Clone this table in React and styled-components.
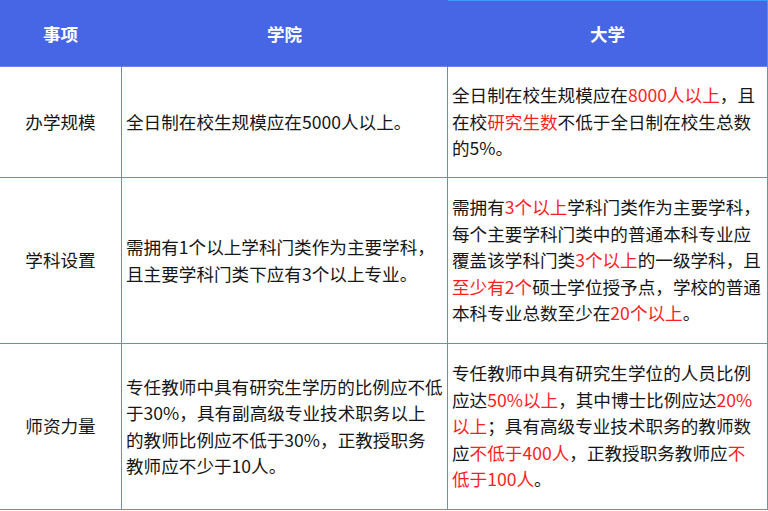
import React from "react"
import styled, { createGlobalStyle } from "styled-components"

const GlobalStyle = createGlobalStyle`
    html, body {
        margin: 0;
        padding: 0;
        background: #ffffff;
    }
    body {
        font-family: "Noto Sans CJK SC", "Noto Sans", sans-serif;
        color: #161616;
    }
`

const rows = [
    {
        item: "办学规模",
        college: [["全日制在校生规模应在5000人以上。"]],
        university: [
            ["全日制在校生规模应在", { red: "8000人以上" }, "，且"],
            ["在校", { red: "研究生数" }, "不低于全日制在校生总数"],
            ["的5%。"],
        ],
    },
    {
        item: "学科设置",
        college: [
            ["需拥有1个以上学科门类作为主要学科，"],
            ["且主要学科门类下应有3个以上专业。"],
        ],
        university: [
            ["需拥有", { red: "3个以上" }, "学科门类作为主要学科，"],
            ["每个主要学科门类中的普通本科专业应"],
            ["覆盖该学科门类", { red: "3个以上" }, "的一级学科，且"],
            [{ red: "至少有2个" }, "硕士学位授予点，学校的普通"],
            ["本科专业总数至少在", { red: "20个以上" }, "。"],
        ],
    },
    {
        item: "师资力量",
        college: [
            ["专任教师中具有研究生学历的比例应不低"],
            ["于30%，具有副高级专业技术职务以上"],
            ["的教师比例应不低于30%，正教授职务"],
            ["教师应不少于10人。"],
        ],
        university: [
            ["专任教师中具有研究生学位的人员比例"],
            ["应达", { red: "50%以上" }, "，其中博士比例应达", { red: "20%" }],
            [{ red: "以上" }, "；具有高级专业技术职务的教师数"],
            ["应", { red: "不低于400人" }, "，正教授职务教师应", { red: "不" }],
            [{ red: "低于100人" }, "。"],
        ],
    },
]

const rowHeights = [111, 166, 166]

const Lines = ({ lines }) => (
    <>
        {lines.map((line, i) => (
            <Line key={i}>
                {line.map((seg, j) =>
                    typeof seg === "string" ? seg : <Red key={j}>{seg.red}</Red>
                )}
            </Line>
        ))}
    </>
)

const App = () => {
    return (
        <>
            <GlobalStyle />
            <Table>
                <HeadCell>事项</HeadCell>
                <HeadCell>学院</HeadCell>
                <HeadCell $accent>大学</HeadCell>
                {rows.map((row, i) => (
                    <React.Fragment key={row.item}>
                        <ItemCell $h={rowHeights[i]}>{row.item}</ItemCell>
                        <TextCell $h={rowHeights[i]}>
                            <Lines lines={row.college} />
                        </TextCell>
                        <TextCell $h={rowHeights[i]}>
                            <Lines lines={row.university} />
                        </TextCell>
                    </React.Fragment>
                ))}
            </Table>
        </>
    )
}

export default App

const Table = styled.div`
    display: grid;
    grid-template-columns: 122px 326px 320px;
    width: 768px;
`

const HeadCell = styled.div`
    box-sizing: border-box;
    height: 67px;
    padding-bottom: 1px;
    display: flex;
    align-items: center;
    justify-content: center;
    background: #4666e6;
    color: #ffffff;
    font-size: 17.5px;
    font-weight: 700;
    border-top: 1px solid ${p => (p.$accent ? "#3a9cf2" : "#4666e6")};
    border-right: 1px solid ${p => (p.$accent ? "#3a9cf2" : "#4666e6")};
    border-bottom: 1px solid #6d84f0;
`

const Cell = styled.div`
    box-sizing: border-box;
    height: ${p => p.$h}px;
    display: flex;
    flex-direction: column;
    justify-content: center;
    border-bottom: 1px solid #6d84f0;
    border-right: 1px solid #6d84f0;
    font-size: 17.6px;
    line-height: 26.5px;
`

const ItemCell = styled(Cell)`
    align-items: center;
`

const TextCell = styled(Cell)`
    align-items: flex-start;
    padding-left: 4px;
    white-space: nowrap;
`

const Line = styled.div`
    display: block;
`

const Red = styled.span`
    color: #ff1d1d;
`
